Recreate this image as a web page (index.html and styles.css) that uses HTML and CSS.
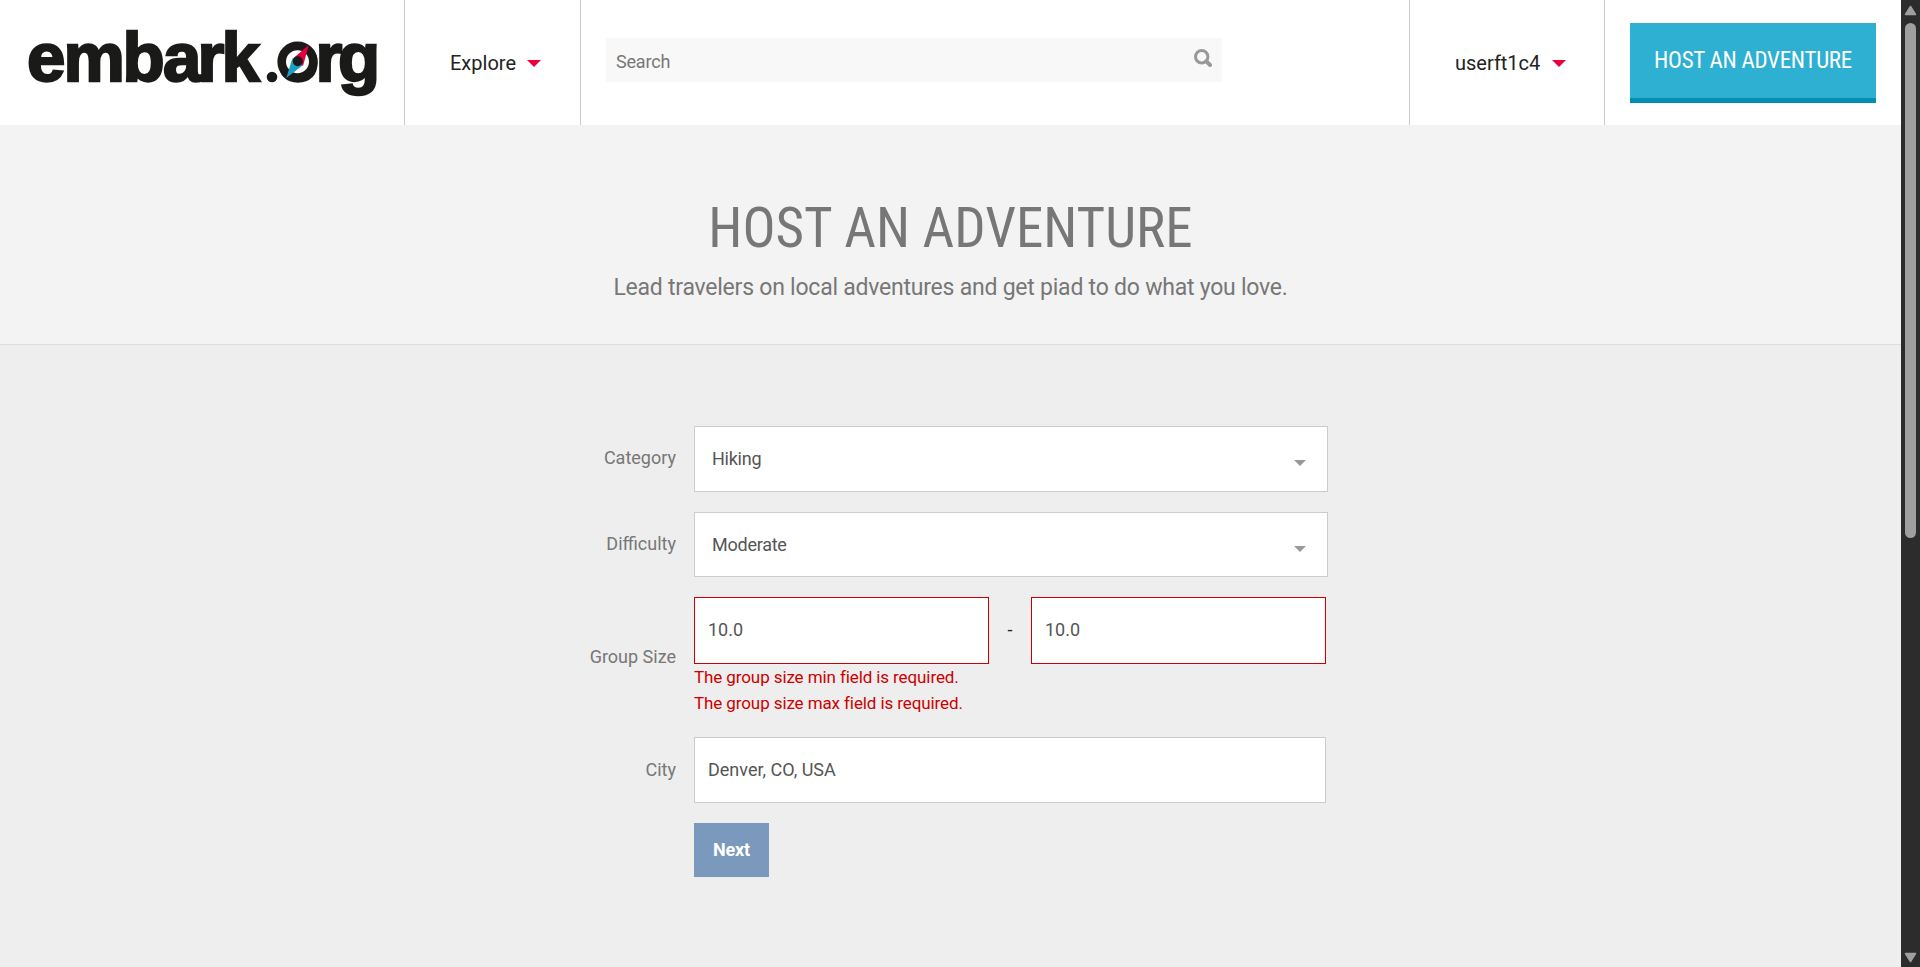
FILE: index.html
```html
<!DOCTYPE html>
<html lang="en">
<head>
<meta charset="utf-8">
<title>Host an Adventure - embark.org</title>
<link rel="stylesheet" href="styles.css">
</head>
<body>
<div class="page">
  <header class="header">
    <a class="brand">
      <svg class="logo" width="370" height="98" viewBox="14 10 370 98">
        <text class="logo-text" y="81" x="27 63.5 122.5 163 197.5 221.5">embark</text>
        <circle cx="272" cy="77" r="5.3" fill="#1a1a18"/>
        <text class="logo-text" y="81" x="277 315.5 338">org</text>
        <circle class="ring" cx="297.5" cy="61.7" r="15.8"/>
        <path d="M308.8 45 293 58.5 303 66z" fill="#e4003f"/>
        <path d="M286.3 78 292.5 58 302.5 65.5z" fill="#1c9fc4"/>
        <circle cx="297.8" cy="61.3" r="5" fill="#1a1a18"/>
      </svg>
    </a>
    <a class="menu explore">Explore<i class="caret"></i></a>
    <div class="search-area">
      <div class="search"><span>Search</span>
        <svg class="lens" width="18" height="18" viewBox="0 0 18 18"><circle cx="7.7" cy="7.7" r="6.2"/><path class="handle" d="M12.4 12.4l3.6 3.6"/></svg>
      </div>
    </div>
    <a class="menu user">userft1c4<i class="caret"></i></a>
    <div class="cta"><a class="host"><span class="host-text">HOST AN ADVENTURE</span></a></div>
  </header>
  <section class="hero">
    <h1 class="title">HOST AN ADVENTURE</h1>
    <p class="lead">Lead travelers on local adventures and get piad to do what you love.</p>
  </section>
  <main class="form">
    <div class="row category"><label class="label">Category</label><div class="field select">Hiking<i class="arrow"></i></div></div>
    <div class="row difficulty"><label class="label">Difficulty</label><div class="field select">Moderate<i class="arrow"></i></div></div>
    <div class="row group">
      <label class="label">Group Size</label>
      <div class="stack">
        <div class="range"><div class="field invalid">10.0</div><span class="dash">-</span><div class="field invalid">10.0</div></div>
        <div class="error">The group size min field is required.</div>
        <div class="error">The group size max field is required.</div>
      </div>
    </div>
    <div class="row city"><label class="label">City</label><div class="field">Denver, CO, USA</div></div>
    <a class="next">Next</a>
  </main>
</div>
<aside class="scrollbar">
  <svg class="tip" width="13" height="11" viewBox="0 0 13 11"><path d="M6.5 1.5 11.5 9.5H1.5z"/></svg>
  <div class="thumb"></div>
  <svg class="tip tip-down" width="13" height="11" viewBox="0 0 13 11"><path d="M6.5 9.5 11.5 1.5H1.5z"/></svg>
</aside>
</body>
</html>
```
FILE: styles.css
```css
* { box-sizing: border-box; }
body { margin: 0; display: flex; height: 967px; overflow: hidden; font-family: Roboto, sans-serif; font-size: 18px; color: #222; background: #eee; }
.page { width: 1901px; height: 967px; }
.header { display: flex; height: 125px; background: #fff; }
.brand { width: 405px; padding: 10px 0 0 14px; border-right: 1px solid #ccc; }
.logo { display: block; overflow: visible; }
.logo-text { font: bold 69px "Liberation Sans", Arial, sans-serif; fill: #1a1a18; stroke: #1a1a18; stroke-width: 2.3; }
.ring { fill: #fff; stroke: #1a1a18; stroke-width: 8.6; }
.menu { display: flex; align-items: center; font-size: 20px; line-height: 24px; padding-top: 1px; border-right: 1px solid #ccc; }
.explore { width: 176px; padding-left: 45px; }
.user { width: 196px; padding-left: 45px; border-left: 1px solid #ccc; }
.caret { margin-left: 11px; border: 7px solid transparent; border-top-color: #ea003c; border-bottom: 0; }
.user .caret { margin-left: 12px; }
.search-area { flex: 1; padding: 38px 0 0 25px; }
.search { display: flex; justify-content: space-between; align-items: center; width: 616px; height: 44px; padding: 2px 10px 0; background: #f8f8f8; color: #777; letter-spacing: -.2px; }
.lens { fill: none; stroke: #999; stroke-width: 3; margin-top: -7px; }
.handle { stroke-width: 4; stroke-linecap: round; }
.cta { width: 296px; padding: 23px 0 0 25px; }
.host { display: flex; align-items: center; justify-content: center; width: 246px; height: 80px; background: #2eb0d2; border-bottom: 5px solid #008fb1; color: #fff; }
.host-text { font-family: "Roboto Condensed", Roboto, sans-serif; font-stretch: condensed; font-size: 23px; letter-spacing: -.28px; white-space: nowrap; }
.hero { height: 220px; padding-top: 70px; text-align: center; background: #f3f3f3; border-bottom: 1px solid #ddd; color: #777; }
.title { margin: 0; font-family: "Roboto Condensed", Roboto, sans-serif; font-stretch: condensed; font-weight: 400; font-size: 55px; line-height: 66px; }
.lead { margin: 13px 0 0; font-size: 23px; line-height: 28px; letter-spacing: -.23px; }
.form { padding: 81px 0 0 580px; }
.row { display: flex; align-items: center; margin-bottom: 20px; width: 746px; }
.label { width: 96px; margin-right: 18px; padding-bottom: 3px; text-align: right; color: #777; white-space: nowrap; }
.field { display: flex; align-items: center; flex: 1; height: 66px; padding: 0 13px 2px; border: 1px solid #ccc; background: #fff; color: #555; }
.category, .difficulty { width: 748px; }
.select { justify-content: space-between; padding: 0 21px 2px 17px; letter-spacing: -.25px; }
.difficulty .field { height: 65px; padding-bottom: 0; }
.arrow { margin-top: 10px; border: 6px solid transparent; border-top-color: #999; border-bottom: 0; }
.difficulty .arrow { margin-top: 8px; }
.group { height: 120px; }
.group .label, .city .label { padding-bottom: 1px; }
.stack { flex: 1; padding-bottom: 1px; }
.range { display: flex; align-items: center; }
.range .field { height: 67px; }
.field.invalid { border-color: #c00; }
.dash { width: 42px; padding-bottom: 3px; text-align: center; }
.error { color: #c00; font-size: 17px; line-height: 26px; letter-spacing: -.1px; }
.next { display: flex; align-items: center; justify-content: center; width: 75px; height: 54px; padding-bottom: 2px; margin-left: 114px; background: #7b99bc; color: #fff; font-weight: 700; letter-spacing: -.2px; }
.scrollbar { display: flex; flex-direction: column; align-items: center; width: 19px; padding: 5px 0 4px; background: #2c2c2c; }
.tip { fill: #9f9f9f; stroke: #9f9f9f; stroke-width: 1.5; stroke-linejoin: round; }
.tip-down { margin-top: auto; }
.thumb { width: 11px; height: 515px; margin-top: 7px; border-radius: 6px; background: #9f9f9f; }
```
